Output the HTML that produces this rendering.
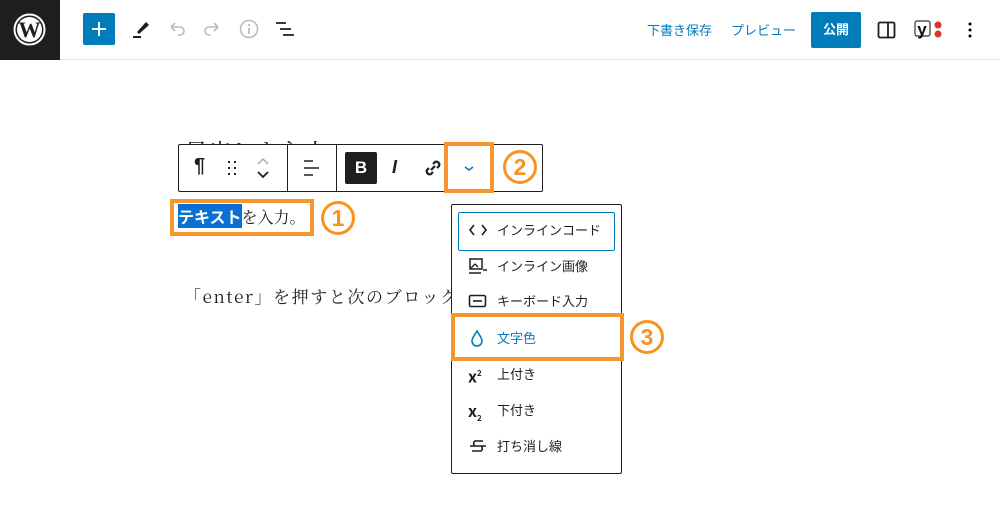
<!DOCTYPE html>
<html><head><meta charset="utf-8"><style>
*{margin:0;padding:0;box-sizing:border-box}
body{width:1000px;height:509px;background:#fff;position:relative;overflow:hidden;font-family:"Liberation Sans","Noto Sans CJK JP",sans-serif}
.a{position:absolute}
.ob{position:absolute;border:4px solid #f7962e}
.it{position:absolute;left:468px;font-size:13px;color:#1e1e1e;font-family:"Noto Sans CJK JP",sans-serif;line-height:18px}
.it span{position:absolute;left:29px;white-space:nowrap}
</style></head><body>
<div class="a" style="left:0;top:0;width:1000px;height:60px;border-bottom:1px solid #e0e0e0"></div>
<div class="a" style="left:0;top:0;width:60px;height:60px;background:#1e1e1e"></div>
<svg class="a" style="left:13px;top:13px" width="33" height="33" viewBox="0 0 33 33"><circle cx="16.5" cy="16.5" r="15" fill="none" stroke="#fff" stroke-width="2"/><circle cx="16.5" cy="16.5" r="12.5" fill="#fff"/><text x="16.5" y="24" text-anchor="middle" font-family="Liberation Serif" font-weight="bold" font-size="22" fill="#1e1e1e">W</text></svg>
<div class="a" style="left:83px;top:13px;width:32px;height:32px;background:#007cba;border-radius:2px"></div>
<svg class="a" style="left:83px;top:13px" width="32" height="32"><path d="M16 9v14M9 16h14" stroke="#fff" stroke-width="2"/></svg>
<svg class="a" style="left:130px;top:16px" width="24" height="24"><path d="M7 16l9-10 3 3-10 9z" fill="#1e1e1e"/><path d="M3 21h8" stroke="#1e1e1e" stroke-width="2"/></svg>
<svg class="a" style="left:165px;top:18px" width="24" height="24"><path d="M6 9h9a4 4 0 0 1 0 8h-2M6 9l4-4M6 9l4 4" fill="none" stroke="#bbb" stroke-width="1.6"/></svg>
<svg class="a" style="left:200px;top:18px" width="24" height="24"><path d="M18 9H9a4 4 0 0 0 0 8h2M18 9l-4-4M18 9l-4 4" fill="none" stroke="#bbb" stroke-width="1.6"/></svg>
<svg class="a" style="left:238px;top:18px" width="22" height="22"><circle cx="11" cy="11" r="8.5" fill="none" stroke="#bbb" stroke-width="1.6"/><path d="M11 10v6M11 6v2" stroke="#bbb" stroke-width="1.8"/></svg>
<svg class="a" style="left:274px;top:20px" width="24" height="20"><path d="M2 3h10M6 9h11M9 15h11" stroke="#1e1e1e" stroke-width="1.8"/></svg>
<div class="a" style="left:647px;top:20px;font-size:13px;color:#007cba">下書き保存</div>
<div class="a" style="left:731px;top:20px;font-size:13px;color:#007cba">プレビュー</div>
<div class="a" style="left:811px;top:12px;width:50px;height:36px;background:#007cba;border-radius:2px;color:#fff;font-size:13px;font-weight:bold;text-align:center;line-height:36px">公開</div>
<svg class="a" style="left:877px;top:20px" width="20" height="20"><rect x="1.5" y="2.5" width="16" height="15" rx="1.5" fill="none" stroke="#1e1e1e" stroke-width="1.8"/><path d="M11 3v14" stroke="#1e1e1e" stroke-width="1.8"/></svg>
<svg class="a" style="left:913px;top:18px" width="36" height="24"><rect x="2" y="3" width="15" height="15" rx="2" fill="none" stroke="#333" stroke-width="1.2"/><text x="9" y="17" text-anchor="middle" font-size="17" font-weight="bold" fill="#111" font-family="Liberation Sans">y</text><circle cx="25" cy="7" r="3.5" fill="#dc3232"/><circle cx="25" cy="16" r="3.5" fill="#dc3232"/></svg>
<svg class="a" style="left:964px;top:20px" width="12" height="20"><circle cx="6" cy="4" r="1.5"/><circle cx="6" cy="10" r="1.5"/><circle cx="6" cy="16" r="1.5"/></svg>

<div class="a" style="left:184px;top:140px;width:170px;height:4px;overflow:hidden;color:#1e1e1e;font-size:24px;font-family:'Noto Serif CJK SC',serif;line-height:22px">見出しを入力</div>
<div class="a" style="left:178px;top:144px;width:365px;height:48px;border:1px solid #1e1e1e;background:#fff;border-radius:2px"></div>
<div class="a" style="left:287px;top:144px;width:1px;height:48px;background:#1e1e1e"></div>
<div class="a" style="left:336px;top:144px;width:1px;height:48px;background:#1e1e1e"></div>
<div class="a" style="left:194px;top:155px;font-size:20px;font-weight:bold;color:#1e1e1e">¶</div>
<svg class="a" style="left:226px;top:159px" width="12" height="18" fill="#1e1e1e"><rect x="2" y="2" width="2" height="2"/><rect x="8" y="2" width="2" height="2"/><rect x="2" y="8" width="2" height="2"/><rect x="8" y="8" width="2" height="2"/><rect x="2" y="14" width="2" height="2"/><rect x="8" y="14" width="2" height="2"/></svg>
<svg class="a" style="left:254px;top:155px" width="18" height="28"><path d="M4 9l5-5 5 5" fill="none" stroke="#aaa" stroke-width="1.5"/><path d="M4 17l5 5 5-5" fill="none" stroke="#1e1e1e" stroke-width="1.8"/></svg>
<svg class="a" style="left:302px;top:158px" width="20" height="20"><path d="M2 3h9M2 10h15M2 17h9" stroke="#1e1e1e" stroke-width="1.6"/></svg>
<div class="a" style="left:345px;top:152px;width:32px;height:32px;background:#1e1e1e;border-radius:2px;color:#fff;font-weight:bold;font-size:17px;text-align:center;line-height:32px">B</div>
<div class="a" style="left:392px;top:157px;font-size:18px;font-style:italic;font-weight:bold;color:#1e1e1e">I</div>
<svg class="a" style="left:421px;top:156px" width="24" height="24"><path d="M10 14l4-4M8 12l-2 2a3 3 0 0 0 4 4l2-2M16 12l2-2a3 3 0 0 0-4-4l-2 2" fill="none" stroke="#1e1e1e" stroke-width="2.2"/></svg>
<svg class="a" style="left:462px;top:162px" width="14" height="12"><path d="M3 5l4 3 4-3" fill="none" stroke="#007cba" stroke-width="1.6"/></svg>
<div class="ob" style="left:444px;top:142px;width:50px;height:51px"></div>
<svg class="a" style="left:502px;top:149px" width="36" height="36"><circle cx="18" cy="18" r="15.5" fill="none" stroke="#f7931e" stroke-width="3"/><text x="18" y="26" text-anchor="middle" font-family="Liberation Sans" font-weight="bold" font-size="23" fill="#f7931e">2</text></svg>

<div class="a" style="left:178px;top:205px;font-size:16px;font-family:'Noto Serif CJK SC',serif;color:#1e1e1e;line-height:22px;white-space:nowrap"><span style="background:#0a70d4;color:#fff;font-family:'Noto Sans CJK JP',sans-serif;font-weight:bold">テキスト</span>を入力。</div>
<div class="ob" style="left:170px;top:199px;width:144px;height:37px"></div>
<svg class="a" style="left:320px;top:200px" width="36" height="36"><circle cx="18" cy="18" r="15.5" fill="none" stroke="#f7931e" stroke-width="3"/><text x="18" y="26" text-anchor="middle" font-family="Liberation Sans" font-weight="bold" font-size="23" fill="#f7931e">1</text></svg>

<div class="a" style="left:184px;top:283px;font-size:17px;font-family:'Noto Serif CJK SC',serif;color:#1e1e1e;white-space:nowrap;letter-spacing:1.6px">「enter」を押すと次のブロックへ</div>

<div class="a" style="left:451px;top:204px;width:171px;height:270px;border:1px solid #1e1e1e;background:#fff;border-radius:2px"></div>
<div class="a" style="left:458px;top:212px;width:157px;height:39px;border:1.5px solid #007cba;border-radius:2px"></div>
<div class="it" style="top:221px"><svg width="20" height="18"><path d="M6 4l-4 5 4 5M14 4l4 5-4 5" fill="none" stroke="#1e1e1e" stroke-width="1.6"/></svg><span>インラインコード</span></div>
<div class="it" style="top:257px"><svg width="20" height="18"><rect x="2" y="2" width="12" height="10" fill="none" stroke="#1e1e1e" stroke-width="1.5"/><path d="M3 11l4-4 3 3" fill="none" stroke="#1e1e1e" stroke-width="1.3"/><path d="M1 16h12M15 13h4" stroke="#1e1e1e" stroke-width="1.6"/></svg><span>インライン画像</span></div>
<div class="it" style="top:292px"><svg width="20" height="18"><rect x="1.5" y="3.5" width="16" height="11" rx="1.5" fill="none" stroke="#1e1e1e" stroke-width="1.6"/><path d="M5 9h9" stroke="#1e1e1e" stroke-width="1.6"/></svg><span>キーボード入力</span></div>
<div class="it" style="top:329px;color:#007cba"><svg width="20" height="18"><path d="M9 2C6 7 4 9 4 12a5 5 0 0 0 10 0c0-3-2-5-5-10z" fill="none" stroke="#007cba" stroke-width="1.6"/></svg><span>文字色</span></div>
<div class="it" style="top:365px"><span style="left:0;font-size:16px;font-weight:bold">x<sup style="font-size:8px">2</sup></span><span>上付き</span></div>
<div class="it" style="top:401px"><span style="left:0;font-size:16px;font-weight:bold">x<sub style="font-size:8px">2</sub></span><span>下付き</span></div>
<div class="it" style="top:437px"><svg width="20" height="18"><path d="M15 4H7a3 3 0 0 0 0 5h6a3 3 0 0 1 0 5H4M2 9h16" fill="none" stroke="#1e1e1e" stroke-width="1.6"/></svg><span>打ち消し線</span></div>
<div class="ob" style="left:451px;top:313px;width:173px;height:48px"></div>
<svg class="a" style="left:629px;top:319px" width="36" height="36"><circle cx="18" cy="18" r="15.5" fill="none" stroke="#f7931e" stroke-width="3"/><text x="18" y="26" text-anchor="middle" font-family="Liberation Sans" font-weight="bold" font-size="23" fill="#f7931e">3</text></svg>
</body></html>
